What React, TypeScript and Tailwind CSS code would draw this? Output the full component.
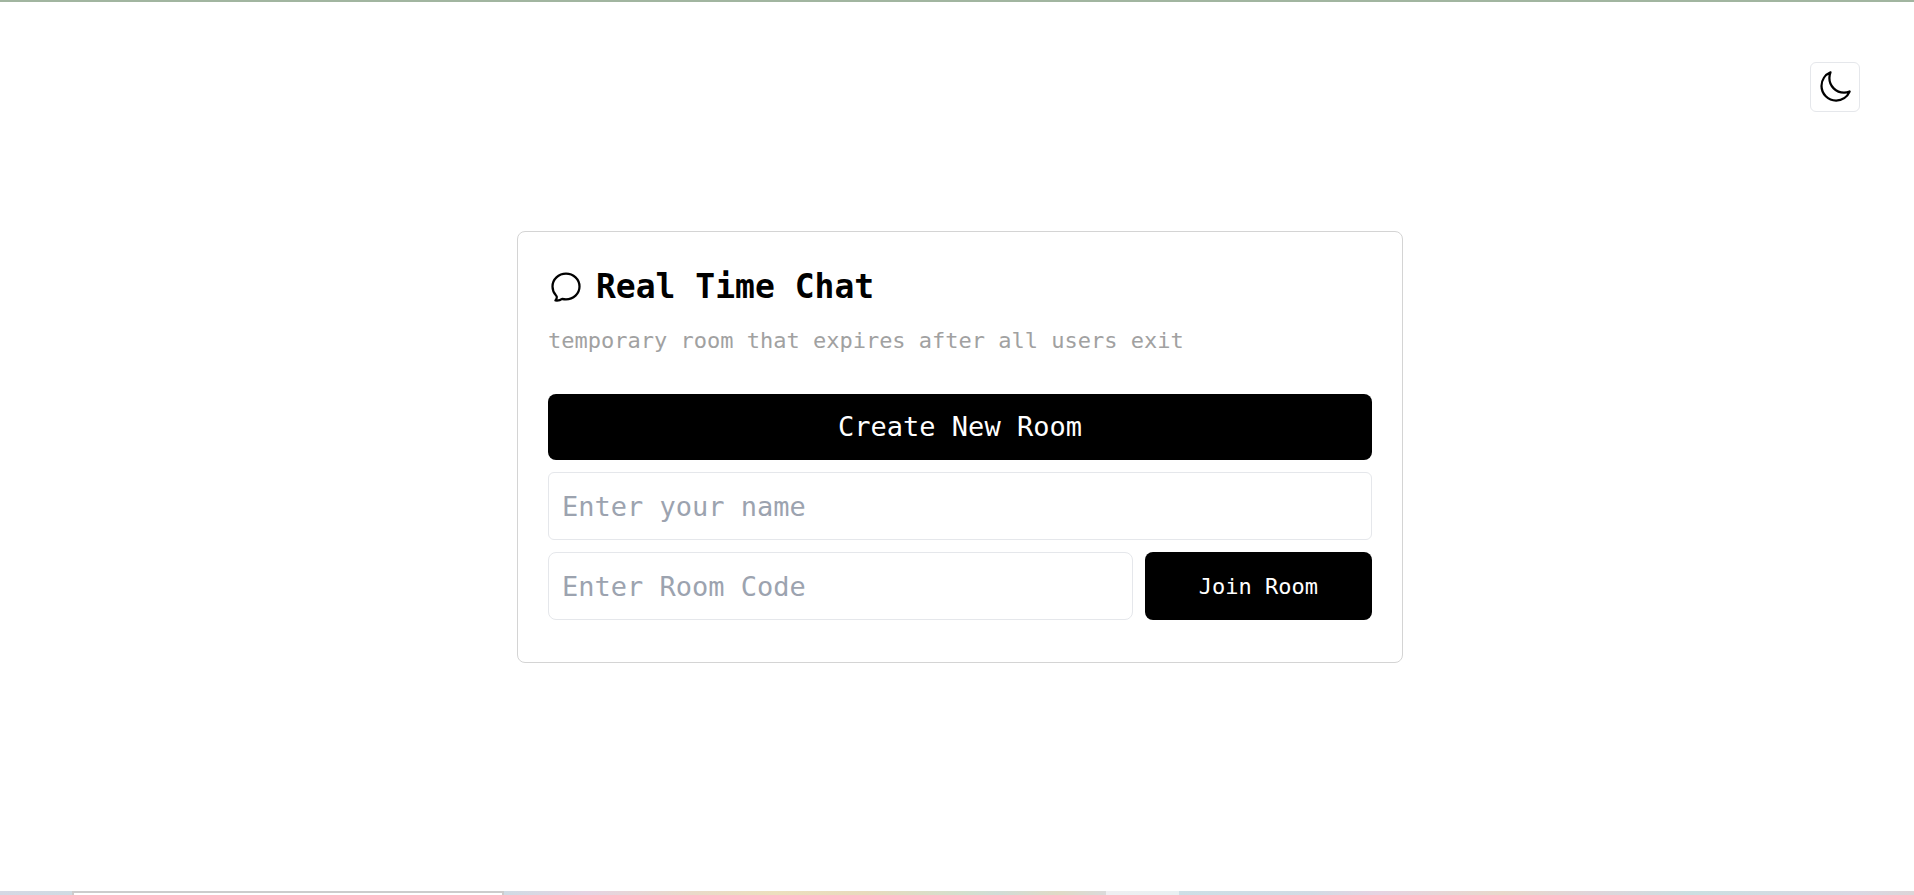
import { HiOutlineMoon } from "react-icons/hi2";

function ChatBubble() {
  return (
    <svg
      aria-hidden="true"
      viewBox="0 0 24 24"
      fill="none"
      stroke="currentColor"
      strokeWidth="1.5"
      strokeLinecap="round"
      strokeLinejoin="round"
      className="size-9"
    >
      <path d="M12 20.25c4.97 0 9-3.86 9-8.6S16.97 3.05 12 3.05 3 6.9 3 11.65c0 2.2.86 4.3 2.273 5.83.432.447.74 1.04.586 1.641a4.483 4.483 0 0 1-.923 1.785A5.969 5.969 0 0 0 6 21c1.282 0 2.47-.402 3.445-1.087.81.22 1.668.337 2.555.337Z" />
    </svg>
  );
}

export default function App() {
  return (
    <div className="flex min-h-screen flex-col bg-white font-['DejaVu_Sans_Mono',monospace] text-black">
      <div className="h-0.5 bg-[#a1b5a0]" />
      <header className="flex justify-end pt-15 pr-13.5">
        <button
          type="button"
          aria-label="Toggle dark mode"
          className="flex size-[50px] items-center justify-center rounded-md border border-gray-200"
        >
          <HiOutlineMoon className="size-9" />
        </button>
      </header>
      <main className="flex grow flex-col items-center pt-[119px] pl-1.5">
        <section className="w-full max-w-[886px] rounded-lg border border-neutral-300 px-[30px] pt-[31px] pb-[42px]">
          <h1 className="flex items-center gap-3 text-[33px] leading-12 font-bold">
            <ChatBubble />
            Real Time Chat
          </h1>
          <p className="mt-3.5 text-[22px] leading-8 text-neutral-400">
            temporary room that expires after all users exit
          </p>
          <form className="mt-[37px] flex flex-col gap-3" onSubmit={(e) => e.preventDefault()}>
            <button type="button" className="h-[66px] rounded-lg bg-black text-[27px] text-white">
              Create New Room
            </button>
            <input
              aria-label="Enter your name"
              placeholder="Enter your name"
              className="h-[68px] rounded-md border border-gray-200 px-[13px] text-[27px] placeholder:text-[#9ca3af]"
            />
            <div className="flex gap-3">
              <input
                aria-label="Enter Room Code"
                placeholder="Enter Room Code"
                className="h-[68px] min-w-0 grow rounded-lg border border-gray-200 px-[13px] text-[27px] placeholder:text-[#9ca3af]"
              />
              <button type="submit" className="rounded-lg bg-black px-[54px] text-[22px] text-white">
                Join Room
              </button>
            </div>
          </form>
        </section>
      </main>
      <footer className="flex h-1">
        <div className="w-[72px] bg-linear-to-r from-[#d5d8e4] to-[#cfdbe3]" />
        <div className="w-[432px] border-x-2 border-t-2 border-[#cccccc] bg-white" />
        <div className="w-[602px] bg-[linear-gradient(to_right,#d0dbe4_0%,#e6d3e2_14%,#e9dac8_32%,#ecdfbe_45%,#e8dabd_60%,#d3dfce_77%,#d1dcd6_82%,#dfdac6_92%,#dadada_100%)]" />
        <div className="w-[73px] bg-linear-to-r from-[#efeff2] to-[#e8f0f2]" />
        <div className="grow bg-[linear-gradient(to_right,#cddfe6_0%,#d2dbe4_18%,#e6d3e2_27%,#e8d8cb_44%,#e0d5da_56%,#cbdfe1_70%,#dad8e3_92%,#dcd5d8_100%)]" />
      </footer>
    </div>
  );
}
